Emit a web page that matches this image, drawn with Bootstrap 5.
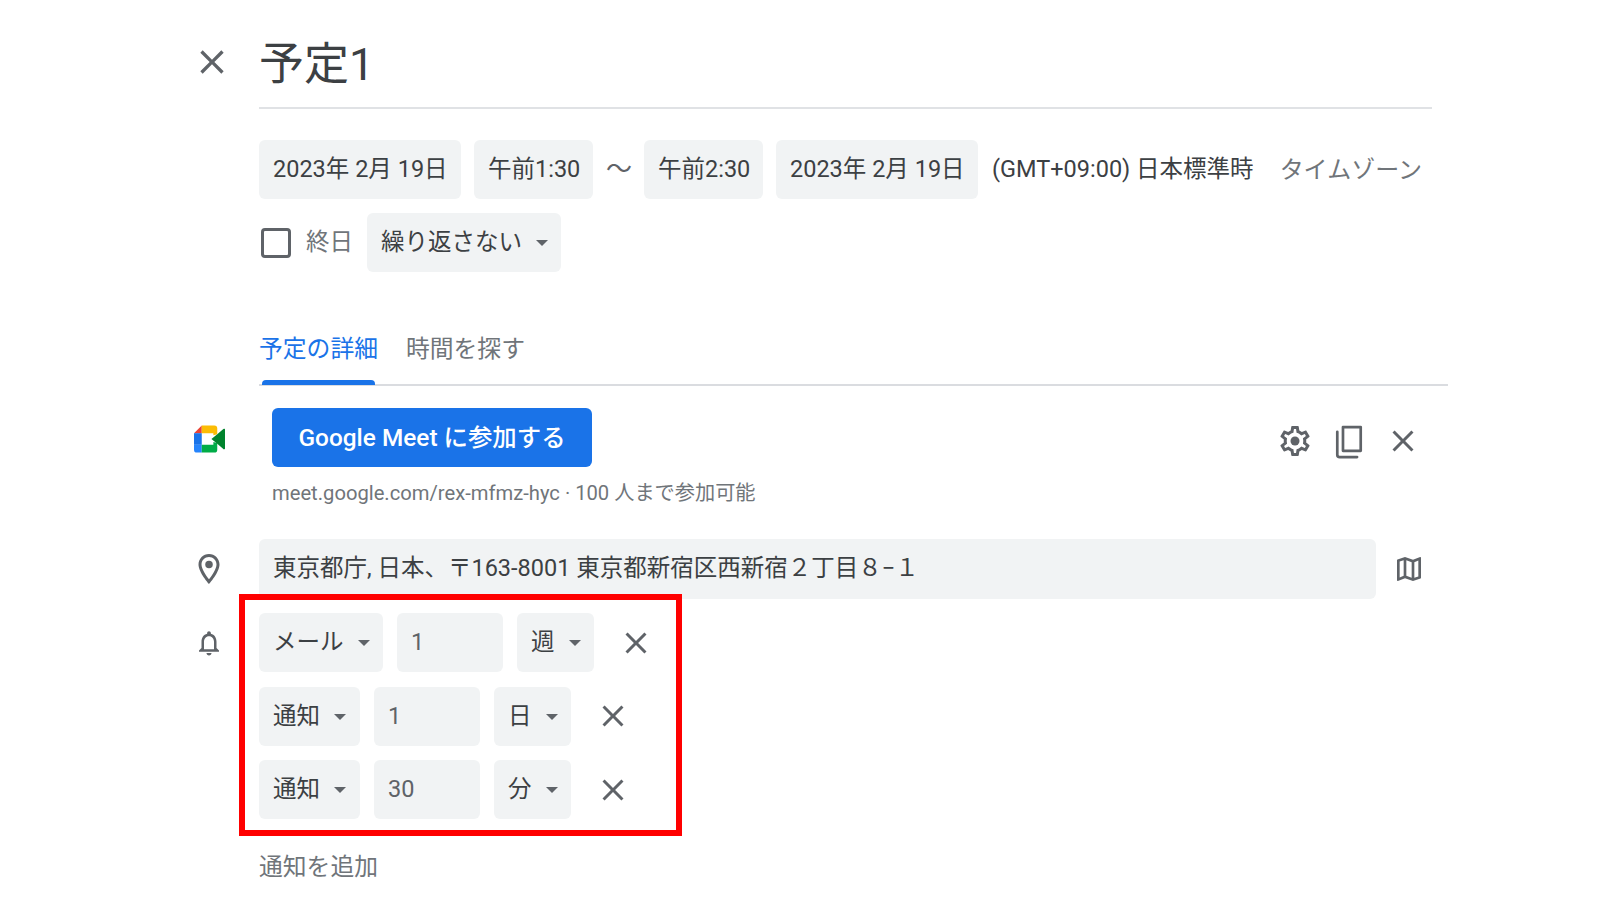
<!DOCTYPE html>
<html lang="ja">
<head>
<meta charset="utf-8">
<title>予定1</title>
<link rel="stylesheet" href="https://cdn.jsdelivr.net/npm/bootstrap@5.3.0/dist/css/bootstrap.min.css">
<style>
html,body{background:#fff;}
body{font-family:Roboto,"Noto Sans CJK JP",sans-serif;font-size:23.5px;color:#3c4043;overflow:hidden;}
.sheet{padding-left:194px;height:900px;}
.gut{width:65px;flex:none;}
.indent{margin-left:65px;}
.ic{display:block;color:#5f6368;fill:currentColor;}
.ic-top{margin-top:42px;margin-left:-2px;}
.title-box{width:1173px;height:75px;margin-top:34px;border-bottom:2px solid #e0e2e5;font-size:45px;line-height:61px;color:#3c4043;}
.row-chips{display:flex;align-items:center;gap:13px;}
.chip{height:59px;padding:0 14px;background:#f1f3f4;border:0;border-radius:6px;color:#3c4043;font-size:23.5px;line-height:55px;white-space:nowrap;display:inline-block;text-align:left;}
.chip.btn:hover,.chip.btn:active{background:#f1f3f4;color:#3c4043;}
.chip.dropdown-toggle::after{color:#5f6368;margin-left:14px;border-top-width:6px;border-right-width:6px;border-left-width:6px;vertical-align:4px;}
.w-date{width:202px}.w-time{width:119px}
.tilde{width:25px;text-align:center;font-size:26px;color:#5f6368;}
.zone{margin-left:1px;white-space:nowrap;}
.tz-link{margin-left:13px;font-size:24px;color:#70757a;white-space:nowrap;}
.mt-time{margin-top:31px;}
.mt-repeat{margin-top:14px;}
.box-check{width:30px;height:30px;border:3px solid #5f6368;border-radius:4px;margin-left:2px;flex:none;}
.all-day{color:#70757a;margin-left:2px;margin-right:1px;}
.w-rep{width:194px;}
.tabs{width:1189px;height:114px;padding-top:53px;border-bottom:2px solid #dadce0;gap:28px;align-items:flex-start;}
.tabs .nav-link{padding:0;font-size:23.8px;line-height:48px;color:#70757a;position:relative;height:60px;}
.tabs .nav-link.active{color:#1a73e8;}
.tabs .nav-link.active::after{content:"";position:absolute;left:3px;right:3px;bottom:0;height:5px;background:#1a73e8;border-radius:4px 4px 0 0;}
.meet-row{margin-top:22px;}
.meet-logo{display:block;margin-top:17px;}
.meet-main{width:1018px;padding-left:13px;flex:none;}
.meet-btn{width:320px;height:59px;padding:0;background:#1a73e8;border:0;border-radius:6px;color:#fff;font-size:24.4px;font-weight:500;line-height:55px;}
.meet-btn:hover{background:#1a73e8;color:#fff;}
.meet-sub{font-size:20.2px;line-height:28px;margin-top:12px;color:#70757a;white-space:nowrap;}
.tools{gap:17px;margin-top:15px;}
.loc-row{margin-top:32px;}
.loc-field{width:1117px;height:60px;padding:0 14px;border:0;border-radius:6px;background:#f1f3f4;color:#3c4043;font-size:23.5px;line-height:58px;}
.map-ic{margin-left:17px;}
.rem-row{margin-top:14px;}
.bell-ic{margin-top:14px;}
.rem-wrap{position:relative;display:flex;flex-direction:column;gap:14.5px;}
.rem-line{display:flex;gap:14px;align-items:center;}
.red-frame{position:absolute;left:-20px;top:-19px;width:443px;height:242px;border:6px solid #f00;pointer-events:none;}
.w-mail{width:124px}.w-tsu{width:101px}.w-num{width:106px}.w-unit{width:77px}
.num-chip{color:#5f6368;line-height:59px;}
.x-gap{margin-left:10px;}
.add-note{margin-top:33px;margin-left:65px;font-size:23.8px;line-height:30px;color:#70757a;}
</style>
</head>
<body>
<svg width="0" height="0" class="position-absolute">
  <defs>
    <symbol id="i-close" viewBox="0 0 24 24"><path d="M19 6.41 17.59 5 12 10.59 6.41 5 5 6.41 10.59 12 5 17.59 6.41 19 12 13.41 17.59 19 19 17.59 13.41 12z"/></symbol>
  </defs>
</svg>
<main class="sheet">
  <div class="d-flex">
    <div class="gut"><svg class="ic ic-top" width="40" height="40"><use href="#i-close"/></svg></div>
    <div class="title-box">予定1</div>
  </div>

  <div class="row-chips mt-time indent">
    <button class="btn chip w-date">2023年 2月 19日</button>
    <button class="btn chip w-time">午前1:30</button>
    <span class="tilde">〜</span>
    <button class="btn chip w-time">午前2:30</button>
    <button class="btn chip w-date">2023年 2月 19日</button>
    <span class="zone">(GMT+09:00) 日本標準時</span>
    <span class="tz-link">タイムゾーン</span>
  </div>

  <div class="row-chips mt-repeat indent">
    <span class="box-check"></span>
    <span class="all-day">終日</span>
    <button class="btn chip w-rep dropdown-toggle">繰り返さない</button>
  </div>

  <nav class="nav tabs indent">
    <a class="nav-link active" href="#">予定の詳細</a>
    <a class="nav-link" href="#">時間を探す</a>
  </nav>

  <div class="d-flex meet-row">
    <div class="gut">
      <svg class="meet-logo" width="31" height="28" viewBox="0 0 32 28">
        <path fill="#ea4335" d="M8 0 0 8h8z"/>
        <path fill="#1a73e8" d="M0 8h8v12H0z"/>
        <path fill="#2684fc" d="M0 20h8v8H3a3 3 0 0 1-3-3z"/>
        <path fill="#fbbc04" d="M8 0h13a3 3 0 0 1 3 3v6l-4 1V8H8z"/>
        <path fill="#00ac47" d="M8 20h12v-3l4 1v7a3 3 0 0 1-3 3H8z"/>
        <path fill="#00832d" d="m18 14 6-5 6-5a1 1 0 0 1 2 1v18a1 1 0 0 1-2 1l-6-5-6-5z"/>
      </svg>
    </div>
    <div class="meet-main">
      <button class="btn meet-btn">Google Meet に参加する</button>
      <div class="meet-sub">meet.google.com/rex-mfmz-hyc · 100 人まで参加可能</div>
    </div>
    <div class="d-flex tools align-items-start">
      <svg class="ic" width="36" height="36" viewBox="0 0 24 24"><path d="M19.43 12.98c.04-.32.07-.64.07-.98 0-.34-.03-.66-.07-.98l2.11-1.65c.19-.15.24-.42.12-.64l-2-3.46c-.09-.16-.26-.25-.44-.25-.06 0-.12.01-.17.03l-2.49 1c-.52-.4-1.08-.73-1.69-.98l-.38-2.65C14.46 2.18 14.25 2 14 2h-4c-.25 0-.46.18-.49.42l-.38 2.65c-.61.25-1.17.59-1.69.98l-2.49-1c-.06-.02-.12-.03-.18-.03-.17 0-.34.09-.43.25l-2 3.46c-.13.22-.07.49.12.64l2.11 1.65c-.04.32-.07.65-.07.98 0 .33.03.66.07.98l-2.11 1.65c-.19.15-.24.42-.12.64l2 3.46c.09.16.26.25.44.25.06 0 .12-.01.17-.03l2.49-1c.52.4 1.08.73 1.69.98l.38 2.65c.03.24.24.42.49.42h4c.25 0 .46-.18.49-.42l.38-2.65c.61-.25 1.17-.59 1.69-.98l2.49 1c.06.02.12.03.18.03.17 0 .34-.09.43-.25l2-3.46c.12-.22.07-.49-.12-.64l-2.11-1.65zm-1.98-1.71c.04.31.05.52.05.73 0 .21-.02.43-.05.73l-.14 1.13.89.7 1.08.84-.7 1.21-1.27-.51-1.04-.42-.9.68c-.43.32-.84.56-1.25.73l-1.06.43-.16 1.13-.2 1.35h-1.4l-.19-1.35-.16-1.13-1.06-.43c-.43-.18-.83-.41-1.23-.71l-.91-.7-1.06.43-1.27.51-.7-1.21 1.08-.84.89-.7-.14-1.13c-.03-.31-.05-.54-.05-.74s.02-.43.05-.73l.14-1.13-.89-.7-1.08-.84.7-1.21 1.27.51 1.04.42.9-.68c.43-.32.84-.56 1.25-.73l1.06-.43.16-1.13.2-1.35h1.39l.19 1.35.16 1.13 1.06.43c.43.18.83.41 1.23.71l.91.7 1.06-.43 1.27-.51.7 1.21-1.07.85-.89.7.14 1.13z"/><circle cx="12" cy="12" r="3"/></svg>
      <svg class="ic" width="38" height="38" viewBox="0 0 24 24"><path fill="none" stroke="currentColor" stroke-width="1.7" d="M8.2 2.6h11.2v15H8.2z" stroke-linejoin="round"/><path fill="none" stroke="currentColor" stroke-width="1.7" stroke-linecap="round" d="M4.6 5.6v14.4a1.5 1.5 0 0 0 1.5 1.5h11"/></svg>
      <svg class="ic" width="36" height="36"><use href="#i-close"/></svg>
    </div>
  </div>

  <div class="d-flex loc-row align-items-center">
    <div class="gut">
      <svg class="ic" width="30" height="34" viewBox="2 1 20 22"><path d="M12 2C8.13 2 5 5.13 5 9c0 5.25 7 13 7 13s7-7.75 7-13c0-3.87-3.13-7-7-7zM7 9c0-2.76 2.24-5 5-5s5 2.24 5 5c0 2.88-2.88 7.19-5 9.88C9.92 16.21 7 11.85 7 9z"/><circle cx="12" cy="9" r="2.5"/></svg>
    </div>
    <div class="loc-field">東京都庁, 日本、〒163-8001 東京都新宿区西新宿２丁目８−１</div>
    <svg class="ic map-ic" width="32" height="32" viewBox="0 0 24 24"><path d="M20.5 3l-.16.03L15 5.1 9 3 3.36 4.9c-.21.07-.36.25-.36.48V20.5c0 .28.22.5.5.5l.16-.03L9 18.9l6 2.1 5.64-1.9c.21-.07.36-.25.36-.48V3.5c0-.28-.22-.5-.5-.5zM10 5.47l4 1.4v11.66l-4-1.4V5.47zm-5 .99l3-1.01v11.7l-3 1.16V6.46zm14 11.08l-3 1.01V6.86l3-1.16v11.84z"/></svg>
  </div>

  <div class="d-flex rem-row">
    <div class="gut">
      <svg class="ic bell-ic" width="30" height="32" viewBox="0 0 24 24"><path d="M12 22c1.1 0 2-.9 2-2h-4c0 1.1.89 2 2 2zm6-6v-5c0-3.07-1.64-5.64-4.5-6.32V4c0-.83-.67-1.5-1.5-1.5s-1.5.67-1.5 1.5v.68C7.63 5.36 6 7.92 6 11v5l-2 2v1h16v-1l-2-2zm-2 1H8v-6c0-2.48 1.51-4.5 4-4.5s4 2.02 4 4.5v6z"/></svg>
    </div>
    <div class="rem-wrap">
      <div class="rem-line">
        <button class="btn chip w-mail dropdown-toggle">メール</button>
        <div class="chip w-num num-chip">1</div>
        <button class="btn chip w-unit dropdown-toggle">週</button>
        <svg class="ic x-gap" width="36" height="36"><use href="#i-close"/></svg>
      </div>
      <div class="rem-line">
        <button class="btn chip w-tsu dropdown-toggle">通知</button>
        <div class="chip w-num num-chip">1</div>
        <button class="btn chip w-unit dropdown-toggle">日</button>
        <svg class="ic x-gap" width="36" height="36"><use href="#i-close"/></svg>
      </div>
      <div class="rem-line">
        <button class="btn chip w-tsu dropdown-toggle">通知</button>
        <div class="chip w-num num-chip">30</div>
        <button class="btn chip w-unit dropdown-toggle">分</button>
        <svg class="ic x-gap" width="36" height="36"><use href="#i-close"/></svg>
      </div>
      <div class="red-frame"></div>
    </div>
  </div>

  <div class="add-note">通知を追加</div>
</main>
<script src="https://cdn.jsdelivr.net/npm/bootstrap@5.3.0/dist/js/bootstrap.bundle.min.js"></script>
</body>
</html>
